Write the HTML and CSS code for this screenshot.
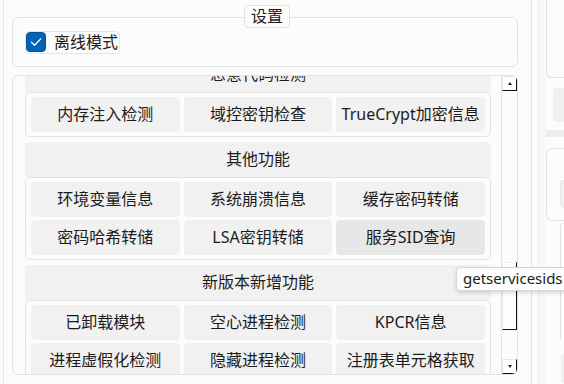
FILE: index.html
```html
<!DOCTYPE html>
<html lang="zh-CN">
<head>
<meta charset="utf-8">
<title>设置</title>
<link rel="stylesheet" href="styles.css">
</head>
<body>
<div class="app">
  <div class="main">
    <div class="settings">
      <div class="legend">设置</div>
      <div class="settings-box">
        <label class="check-row">
          <span class="checkbox"><svg width="20" height="20" viewBox="0 0 20 20"><path d="M5.5 10.2 L8.6 13.2 L14.6 7" fill="none" stroke="#ffffff" stroke-width="1.3" stroke-linecap="round" stroke-linejoin="round"/></svg></span>
          <span class="check-label">离线模式</span>
        </label>
      </div>
    </div>
    <div class="scroll-area">
      <div class="viewport">
        <div class="content">
          <div class="section-head">恶意代码检测</div>
          <div class="btn-group">
            <div class="btn">内存注入检测</div>
            <div class="btn">域控密钥检查</div>
            <div class="btn">TrueCrypt加密信息</div>
          </div>
          <div class="section-head">其他功能</div>
          <div class="btn-group">
            <div class="btn">环境变量信息</div>
            <div class="btn">系统崩溃信息</div>
            <div class="btn">缓存密码转储</div>
            <div class="btn">密码哈希转储</div>
            <div class="btn">LSA密钥转储</div>
            <div class="btn hover">服务SID查询</div>
          </div>
          <div class="section-head">新版本新增功能</div>
          <div class="btn-group">
            <div class="btn">已卸载模块</div>
            <div class="btn">空心进程检测</div>
            <div class="btn">KPCR信息</div>
            <div class="btn">进程虚假化检测</div>
            <div class="btn">隐藏进程检测</div>
            <div class="btn">注册表单元格获取</div>
          </div>
        </div>
      </div>
      <div class="scrollbar">
        <div class="sb-btn"><span class="tri-up"></span></div>
        <div class="sb-track"><div class="sb-thumb" style="margin-top:171px;height:68px"></div></div>
        <div class="sb-btn"><span class="tri-down"></span></div>
      </div>
    </div>
  </div>
  <div class="side">
    <div class="rail1"></div>
    <div class="rail2"></div>
    <div class="panel">
      <div class="pbox1"></div>
      <div class="pgray1"></div>
      <div class="pband"></div>
      <div class="pbox2"><div class="pgray2"></div></div>
      <div class="pbox3"></div>
      <div class="pgray3"></div>
    </div>
  </div>
</div>
<div class="tooltip">getservicesids</div>
</body>
</html>
```
FILE: styles.css
```css
* { box-sizing: border-box; }
html, body { margin: 0; padding: 0; }
body {
  width: 564px;
  height: 384px;
  overflow: hidden;
  background: #fcfcfc;
  color: #1b1b1b;
  font-family: "Noto Sans", "Noto Sans CJK SC", sans-serif;
  font-size: 16px;
  position: relative;
}
.app {
  display: flex;
  height: 384px;
}
.main {
  margin-left: 3px;
  border-left: 1px solid #e6e6e6;
  padding: 5px 0 0 8px;
  width: 515px;
  flex: none;
  display: flex;
  flex-direction: column;
}
.settings {
  display: flex;
  flex-direction: column;
}
.legend {
  align-self: center;
  margin-left: 4px;
  margin-bottom: -11px;
  height: 23px;
  padding: 0 6px;
  line-height: 21px;
  border: 1px solid #e2e2e2;
  border-radius: 4px;
  background: #fcfcfc;
  position: relative;
  z-index: 1;
}
.settings-box {
  border: 1px solid #e2e2e2;
  border-radius: 6px;
  padding: 13px 12px 12px 12px;
  display: flex;
}
.check-row {
  display: flex;
  align-items: flex-start;
  gap: 8px;
  height: 23px;
  border: 1px solid #e6e6e6;
  border-radius: 4px;
  padding: 0 1px 1px 0;
}
.checkbox {
  width: 20px;
  height: 20px;
  border-radius: 4px;
  background: #0063b8;
  border: 1px solid #0a4f8f;
  display: flex;
  align-items: center;
  justify-content: center;
}
.checkbox svg { display: block; margin: -1px; }
.check-label {
  line-height: 20px;
}
.scroll-area {
  margin-top: 8px;
  height: 300px;
  border: 1px solid #e2e2e2;
  border-radius: 6px;
  display: flex;
  overflow: hidden;
}
.viewport {
  flex: 1;
  overflow: hidden;
  padding: 0 10px 0 12px;
}
.content {
  margin-top: -19px;
  display: flex;
  flex-direction: column;
}
.section-head {
  height: 35px;
  line-height: 35px;
  text-align: center;
  background: #f1f1f1;
  border-radius: 4px;
}
.btn-group {
  border: 1px solid #e2e2e2;
  border-radius: 5px;
  padding: 4px 5px;
  display: grid;
  grid-template-columns: repeat(3, 1fr);
  gap: 3px 4px;
  margin-bottom: 5px;
}
.btn {
  height: 35px;
  line-height: 35px;
  text-align: center;
  background: #f1f1f1;
  border-radius: 4px;
  white-space: nowrap;
}
.btn.hover { background: #e7e7e7; }
.scrollbar {
  width: 16px;
  flex: none;
  border-left: 1px solid #e2e2e2;
  display: flex;
  flex-direction: column;
}
.sb-btn {
  height: 15px;
  flex: none;
  border-top: 1px solid #e8e8e8;
  border-left: 1px solid #e8e8e8;
  border-right: 1px solid #111;
  border-bottom: 1px solid #111;
  background: #fdfdfd;
  display: flex;
  align-items: center;
  justify-content: center;
}
.tri-up {
  width: 0; height: 0;
  border-left: 2px solid transparent;
  border-right: 2px solid transparent;
  border-bottom: 3px solid #222;
}
.tri-down {
  width: 0; height: 0;
  border-left: 2px solid transparent;
  border-right: 2px solid transparent;
  border-top: 3px solid #222;
}
.sb-track {
  flex: 1;
  display: flex;
  flex-direction: column;
}
.sb-thumb {
  border-top: 1px solid #f0f0f0;
  border-left: 1px solid #f0f0f0;
  border-right: 1px solid #111;
  border-bottom: 1px solid #111;
  background: #fdfdfd;
}
.side {
  flex: 1;
  display: flex;
  padding-left: 13px;
}
.rail1 {
  width: 7px;
  border-left: 1px solid #e2e2e2;
}
.rail2 {
  width: 8px;
  border-left: 1px solid #ececec;
  background: #f8f8f8;
}
.panel {
  flex: 1;
  display: flex;
  flex-direction: column;
}
.pbox1 {
  height: 78px;
  border-left: 1px solid #e2e2e2;
  border-bottom: 1px solid #e2e2e2;
  border-bottom-left-radius: 6px;
}
.pgray1 {
  margin: 10px 0 0 7px;
  height: 34px;
  background: #f0f0f0;
  border-radius: 4px 0 0 4px;
}
.pband {
  margin-top: 8px;
  height: 7px;
  background: #ededed;
}
.pbox2 {
  margin-top: 11px;
  height: 73px;
  border: 1px solid #e2e2e2;
  border-right: none;
  border-radius: 6px 0 0 6px;
  padding: 31px 0 0 13px;
}
.pgray2 {
  height: 28px;
  background: #f0f0f0;
  border-radius: 4px 0 0 4px;
  border: 1px solid #e6e6e6;
  border-right: none;
}
.pbox3 {
  margin: 2px 0 0 14px;
  height: 116px;
  border-left: 1px solid #e2e2e2;
  border-top: 1px solid #e2e2e2;
  border-top-left-radius: 6px;
}
.pgray3 {
  margin: 15px 0 0 15px;
  height: 29px;
  background: #f0f0f0;
  border-radius: 4px 0 0 4px;
}
.tooltip {
  position: absolute;
  left: 456px;
  top: 267px;
  height: 24px;
  padding: 0 6px;
  border: 1px solid #d6d6d6;
  border-radius: 4px;
  background: #fdfdfd;
  box-shadow: 0 2px 4px rgba(0, 0, 0, 0.14);
  font-size: 15px;
  line-height: 21px;
  white-space: nowrap;
  z-index: 5;
}
```
